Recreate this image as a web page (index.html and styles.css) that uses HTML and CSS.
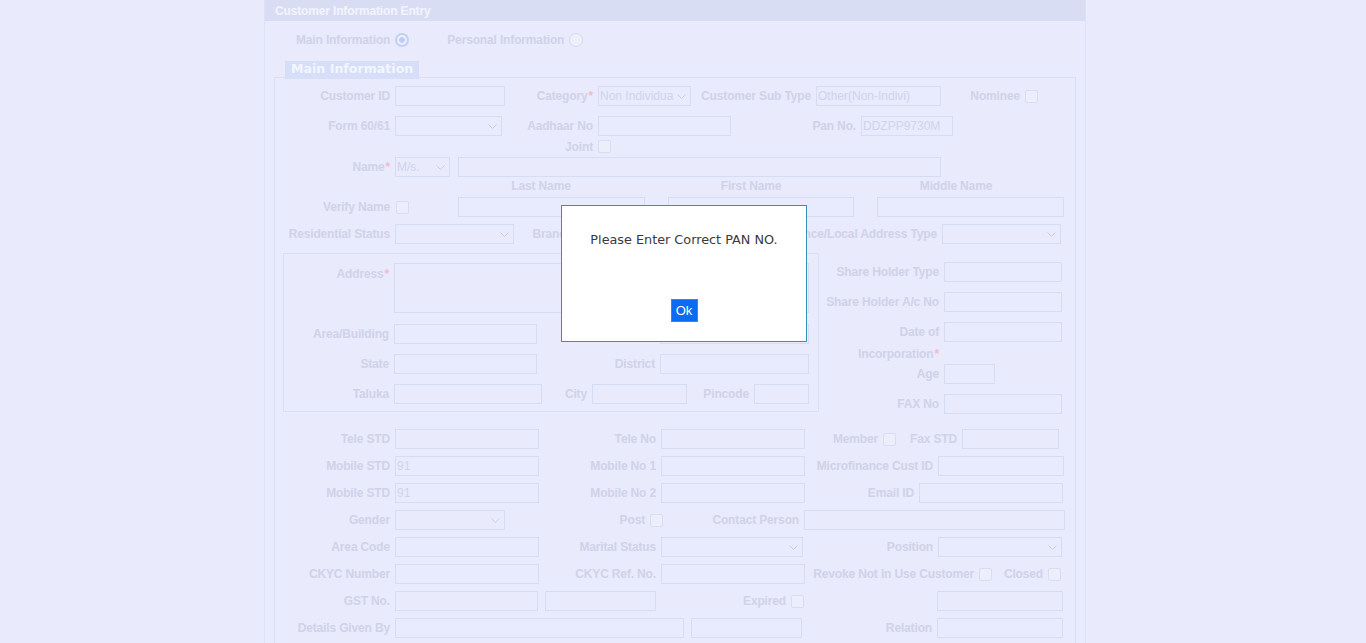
FILE: index.html
```html
<!DOCTYPE html>
<html lang="en">
<head>
<meta charset="utf-8">
<title>Customer Information Entry</title>
<link rel="stylesheet" href="styles.css">
</head>
<body>
<div class="panel">
  <div class="panel-head">Customer Information Entry</div>
  <div class="tabs">
    <span class="tab">Main Information <span class="radio on"></span></span>
    <span class="tab">Personal Information <span class="radio"></span></span>
  </div>
  <div class="legend">Main Information</div>
  <div class="fs-main">
    <div class="row">
      <span class="l w120">Customer ID</span><input class="in w110" type="text">
      <span class="l w93">Category<span class="req">*</span></span>
      <div class="in sel w93"><span class="st">Non Individua</span><svg width="9" height="5" viewBox="0 0 9 5"><polyline points="0.5,0.5 4.5,4.5 8.5,0.5" /></svg></div>
      <span class="l w125">Customer Sub Type</span><input class="in w125" type="text" value="Other(Non-Indivi)">
      <span class="l w84">Nominee</span><input class="cb" type="checkbox">
    </div>
    <div class="row mt10">
      <span class="l w120">Form 60/61</span>
      <div class="in sel w107"><span class="st"></span><svg width="9" height="5" viewBox="0 0 9 5"><polyline points="0.5,0.5 4.5,4.5 8.5,0.5" /></svg></div>
      <span class="l w96">Aadhaar No</span><input class="in w133" type="text">
      <span class="l w130">Pan No.</span><input class="in w92" type="text" value="DDZPP9730M">
    </div>
    <div class="row h13 mt4">
      <span class="l w323">Joint</span><input class="cb" type="checkbox">
    </div>
    <div class="row mt4">
      <span class="l w120">Name<span class="req">*</span></span>
      <div class="in sel w55"><span class="st">M/s.</span><svg width="9" height="5" viewBox="0 0 9 5"><polyline points="0.5,0.5 4.5,4.5 8.5,0.5" /></svg></div>
      <input class="in w483 ml8" type="text">
    </div>
    <div class="row names">
      <span class="nm ml173">Last Name</span>
      <span class="nm ml24">First Name</span>
      <span class="nm ml19">Middle Name</span>
    </div>
    <div class="row">
      <span class="l w120">Verify Name</span><input class="cb ml1" type="checkbox">
      <input class="in w187 ml49" type="text">
      <input class="in w186 ml23" type="text">
      <input class="in w187 ml23" type="text">
    </div>
    <div class="row mt7">
      <span class="l w120">Residential Status</span>
      <div class="in sel w119"><span class="st"></span><svg width="9" height="5" viewBox="0 0 9 5"><polyline points="0.5,0.5 4.5,4.5 8.5,0.5" /></svg></div>
      <span class="l w64">Branch</span>
      <div class="in sel w150"><span class="st"></span><svg width="9" height="5" viewBox="0 0 9 5"><polyline points="0.5,0.5 4.5,4.5 8.5,0.5" /></svg></div>
      <span class="l w214">Residence/Local Address Type</span>
      <div class="in sel w119"><span class="st"></span><svg width="9" height="5" viewBox="0 0 9 5"><polyline points="0.5,0.5 4.5,4.5 8.5,0.5" /></svg></div>
    </div>

    <div class="mid">
      <div class="addr">
        <div class="row tall">
          <span class="l w110 top">Address<span class="req">*</span></span>
          <textarea class="in ta w415"></textarea>
        </div>
        <div class="row mt11">
          <span class="l w110">Area/Building</span><input class="in w143" type="text">
          <span class="l w123">Landmark</span><input class="in w149" type="text">
        </div>
        <div class="row mt10">
          <span class="l w110">State</span><input class="in w143" type="text">
          <span class="l w123">District</span><input class="in w149" type="text">
        </div>
        <div class="row mt10">
          <span class="l w110">Taluka</span><input class="in w148" type="text">
          <span class="l w50">City</span><input class="in w95" type="text">
          <span class="l w67">Pincode</span><input class="in w55" type="text">
        </div>
      </div>
      <div class="side">
        <div class="row">
          <span class="l w125">Share Holder Type</span><input class="in w118" type="text">
        </div>
        <div class="row mt10">
          <span class="l w125">Share Holder A/c No</span><input class="in w118" type="text">
        </div>
        <div class="row tall mt10">
          <span class="l w125 two">Date of<br>Incorporation<span class="req">*</span></span><input class="in w118" type="text">
        </div>
        <div class="row">
          <span class="l w125">Age</span><input class="in w51" type="text">
        </div>
        <div class="row mt10">
          <span class="l w125">FAX No</span><input class="in w118" type="text">
        </div>
      </div>
    </div>

    <div class="lower">
      <div class="row">
        <span class="l w120">Tele STD</span><input class="in w144" type="text">
        <span class="l w122">Tele No</span><input class="in w144" type="text">
        <span class="l w78">Member</span><input class="cb" type="checkbox">
        <span class="l w66">Fax STD</span><input class="in w97" type="text">
      </div>
      <div class="row mt7">
        <span class="l w120">Mobile STD</span><input class="in w144" type="text" value="91">
        <span class="l w122">Mobile No 1</span><input class="in w144" type="text">
        <span class="l w133">Microfinance Cust ID</span><input class="in w126" type="text">
      </div>
      <div class="row mt7">
        <span class="l w120">Mobile STD</span><input class="in w144" type="text" value="91">
        <span class="l w122">Mobile No 2</span><input class="in w144" type="text">
        <span class="l w114">Email ID</span><input class="in w144" type="text">
      </div>
      <div class="row mt7">
        <span class="l w120">Gender</span>
        <div class="in sel w110"><span class="st"></span><svg width="9" height="5" viewBox="0 0 9 5"><polyline points="0.5,0.5 4.5,4.5 8.5,0.5" /></svg></div>
        <span class="l w145">Post</span><input class="cb" type="checkbox">
        <span class="l w141">Contact Person</span><input class="in w261" type="text">
      </div>
      <div class="row mt7">
        <span class="l w120">Area Code</span><input class="in w144" type="text">
        <span class="l w122">Marital Status</span>
        <div class="in sel w142"><span class="st"></span><svg width="9" height="5" viewBox="0 0 9 5"><polyline points="0.5,0.5 4.5,4.5 8.5,0.5" /></svg></div>
        <span class="l w135">Position</span>
        <div class="in sel w124"><span class="st"></span><svg width="9" height="5" viewBox="0 0 9 5"><polyline points="0.5,0.5 4.5,4.5 8.5,0.5" /></svg></div>
      </div>
      <div class="row mt7">
        <span class="l w120">CKYC Number</span><input class="in w144" type="text">
        <span class="l w122">CKYC Ref. No.</span><input class="in w144" type="text">
        <span class="l w174">Revoke Not In Use Customer</span><input class="cb" type="checkbox">
        <span class="l w56">Closed</span><input class="cb" type="checkbox">
      </div>
      <div class="row mt7">
        <span class="l w120">GST No.</span><input class="in w143" type="text">
        <input class="in w111 ml7" type="text">
        <span class="l w135">Expired</span><input class="cb" type="checkbox">
        <input class="in w126 ml133" type="text">
      </div>
      <div class="row mt7">
        <span class="l w120">Details Given By</span><input class="in w289" type="text">
        <input class="in w111 ml7" type="text">
        <span class="l w135">Relation</span><input class="in w126" type="text">
      </div>
    </div>
  </div>
</div>

<div class="backdrop">
  <div class="dialog" role="alertdialog">
    <p class="msg">Please Enter Correct PAN NO.</p>
    <button class="ok" type="button">Ok</button>
  </div>
</div>
</body>
</html>
```

FILE: styles.css
```css
:root {
  --bg: #e9eafc;
  --lbl: #d0d2e8;
  --bd: #d5ddf4;
  --tx: #d0d3ec;
  --ast: #f1bccb;
  --line: #d9e0f6;
}

* { box-sizing: border-box; }

html, body { margin: 0; height: 100%; }

body {
  background: var(--bg);
  font-family: "Liberation Sans", Arial, sans-serif;
  overflow: hidden;
}

.panel {
  margin-left: 264px;
  width: 822px;
  min-height: 720px;
  border: 1px solid #dde1f6;
  border-top: 0;
}

.panel-head {
  height: 21px;
  line-height: 22px;
  padding-left: 10px;
  background: #d9ddf4;
  color: #f2f4fd;
  font-weight: bold;
  font-size: 12px;
  letter-spacing: -0.15px;
}

.tabs {
  display: flex;
  align-items: center;
  height: 20px;
  margin-top: 9px;
  padding-left: 31px;
  font-weight: bold;
  font-size: 12px;
  letter-spacing: -0.15px;
  color: var(--lbl);
}

.tab { display: flex; align-items: center; gap: 5px; }
.tab + .tab { margin-left: 38px; }

.radio {
  width: 14px;
  height: 14px;
  border-radius: 50%;
  border: 1px solid #d6d8ec;
  background: #eef0fc;
}
.radio.on {
  border: 2px solid #c3cff2;
  background: radial-gradient(circle, #c0cdf2 0 2.6px, #eef0fc 3.2px);
}

.legend {
  position: relative;
  width: 134px;
  height: 18px;
  margin: 11px 0 -2px 20px;
  padding-left: 6px;
  line-height: 18px;
  background: #d6dff7;
  color: #f3f6fe;
  font: bold 12.6px "DejaVu Sans", Verdana, sans-serif;
  white-space: nowrap;
}

.fs-main {
  width: 802px;
  margin-left: 9px;
  padding-top: 8px;
  border: 1px solid var(--line);
  min-height: 700px;
}

.row { display: flex; align-items: center; height: 20px; }
.row.h13 { height: 13px; }
.row.tall { height: auto; align-items: flex-start; }
.row.names { align-items: flex-start; }

.l {
  flex: none;
  padding-right: 5px;
  text-align: right;
  font-weight: bold;
  font-size: 12px;
  letter-spacing: -0.15px;
  color: var(--lbl);
  white-space: nowrap;
}
.l.top { line-height: 22px; }
.l.two { line-height: 22px; margin: -1px 0 -1px; }
.req { color: var(--ast); margin-left: 1px; }

.nm {
  flex: none;
  width: 186px;
  text-align: center;
  line-height: 18px;
  font-weight: bold;
  font-size: 12px;
  letter-spacing: -0.15px;
  color: var(--lbl);
}

.in {
  flex: none;
  height: 20px;
  margin: 0;
  padding: 0 1px;
  border: 1px solid var(--bd);
  border-radius: 0;
  background: var(--bg);
  font: 12px "Liberation Sans", Arial, sans-serif;
  line-height: 18px;
  color: var(--tx);
  white-space: nowrap;
  overflow: hidden;
  outline: none;
}
.ta { height: 50px; resize: none; }

.sel {
  display: flex;
  align-items: center;
  padding-right: 4px;
}
.sel .st { flex: 1; min-width: 0; overflow: hidden; }
.sel svg { flex: none; }
.sel polyline { fill: none; stroke: #caccE2; stroke-width: 1; }

.cb {
  flex: none;
  appearance: none;
  -webkit-appearance: none;
  width: 13px;
  height: 13px;
  margin: 0;
  border: 1px solid #dadcef;
  border-radius: 2px;
  background: #eceefc;
}

.mid {
  display: flex;
  align-items: flex-start;
  margin: 9px 0 0 8px;
}
.addr {
  flex: none;
  width: 536px;
  padding: 9px 0 7px;
  border: 1px solid var(--line);
}
.side { flex: none; padding-top: 9px; }

.lower { margin-top: 15px; }

.mt4 { margin-top: 4px; }
.mt7 { margin-top: 7px; }
.mt10 { margin-top: 10px; }
.mt11 { margin-top: 11px; }
.ml1 { margin-left: 1px; }
.ml7 { margin-left: 7px; }
.ml8 { margin-left: 8px; }
.ml19 { margin-left: 19px; }
.ml23 { margin-left: 23px; }
.ml24 { margin-left: 24px; }
.ml49 { margin-left: 49px; }
.ml133 { margin-left: 133px; }
.ml173 { margin-left: 173px; }

.w50 { width: 50px; }
.w51 { width: 51px; }
.w55 { width: 55px; }
.w56 { width: 56px; }
.w64 { width: 64px; }
.w66 { width: 66px; }
.w67 { width: 67px; }
.w78 { width: 78px; }
.w84 { width: 84px; }
.w92 { width: 92px; }
.w93 { width: 93px; }
.w95 { width: 95px; }
.w96 { width: 96px; }
.w97 { width: 97px; }
.w107 { width: 107px; }
.w110 { width: 110px; }
.w111 { width: 111px; }
.w114 { width: 114px; }
.w118 { width: 118px; }
.w119 { width: 119px; }
.w120 { width: 120px; }
.w122 { width: 122px; }
.w123 { width: 123px; }
.w124 { width: 124px; }
.w125 { width: 125px; }
.w126 { width: 126px; }
.w130 { width: 130px; }
.w133 { width: 133px; }
.w135 { width: 135px; }
.w141 { width: 141px; }
.w142 { width: 142px; }
.w143 { width: 143px; }
.w144 { width: 144px; }
.w145 { width: 145px; }
.w148 { width: 148px; }
.w149 { width: 149px; }
.w150 { width: 150px; }
.w174 { width: 174px; }
.w186 { width: 186px; }
.w187 { width: 187px; }
.w214 { width: 214px; }
.w261 { width: 261px; }
.w289 { width: 289px; }
.w323 { width: 323px; }
.w415 { width: 415px; }
.w483 { width: 483px; }

.backdrop {
  position: fixed;
  inset: 0;
  display: flex;
  justify-content: center;
  align-items: flex-start;
  padding: 205px 0 0 2px;
}

.dialog {
  width: 246px;
  height: 137px;
  padding-top: 26px;
  background: #fff;
  border: 1px solid #3b8dbd;
  text-align: center;
}

.msg {
  margin: 0;
  font: 12.8px "DejaVu Sans", Verdana, sans-serif;
  line-height: 15px;
  color: #3a3a3a;
}

.ok {
  display: block;
  width: 27px;
  height: 23px;
  margin: 52px auto 0;
  padding: 0;
  background: #0b6cf3;
  border: 1px solid #3b8dbd;
  border-radius: 0;
  color: #fff;
  font: 13px "Liberation Sans", Arial, sans-serif;
}
```
